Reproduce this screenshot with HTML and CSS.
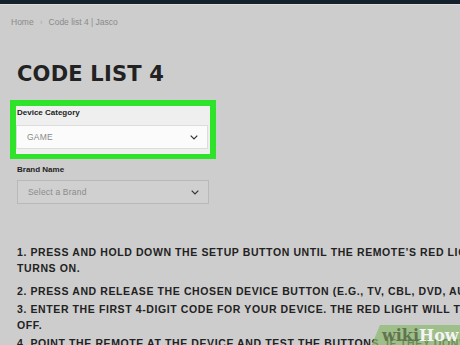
FILE: index.html
```html
<!DOCTYPE html>
<html lang="en">
<head>
    <meta charset="UTF-8">
    <meta name="viewport" content="width=device-width, initial-scale=1.0">
    <title>Code List 4 | Jasco</title>
    <link rel="stylesheet" href="styles.css">
</head>
<body>
    <div class="topbar"></div>

    <div class="page">
        <!-- Breadcrumb -->
        <div class="breadcrumb">
            <span>Home</span>
            <span class="sep">›</span>
            <span>Code list 4 | Jasco</span>
        </div>

        <h1>CODE LIST 4</h1>

        <!-- Highlighted field -->
        <div class="highlight">
            <div class="field">
                <label>Device Category</label>
                <div class="select select-white">
                    <span>GAME</span>
                    <svg class="chevron" width="8" height="5" viewBox="0 0 8 5"><path d="M0.7 0.7 L4 4 L7.3 0.7" fill="none" stroke="#333" stroke-width="1.2"/></svg>
                </div>
            </div>
        </div>

        <div class="field field-plain">
            <label>Brand Name</label>
            <div class="select">
                <span>Select a Brand</span>
                <svg class="chevron" width="8" height="5" viewBox="0 0 8 5"><path d="M0.7 0.7 L4 4 L7.3 0.7" fill="none" stroke="#333" stroke-width="1.2"/></svg>
            </div>
        </div>

        <!-- Programming steps -->
        <div class="steps">
            <p class="first">1. PRESS AND HOLD DOWN THE SETUP BUTTON UNTIL THE REMOTE’S RED LIGHT<br>TURNS ON.</p>
            <p>2. PRESS AND RELEASE THE CHOSEN DEVICE BUTTON (E.G., TV, CBL, DVD, AUX).</p>
            <p>3. ENTER THE FIRST 4-DIGIT CODE FOR YOUR DEVICE. THE RED LIGHT WILL TURN<br>OFF.</p>
            <p>4. POINT THE REMOTE AT THE DEVICE AND TEST THE BUTTONS. IF THEY DON'T WORK</p>
        </div>
    </div>

    <div class="watermark"><span class="wiki">wiki</span><span class="how">How</span></div>
</body>
</html>
```

FILE: styles.css
```css
* {
    margin: 0;
    padding: 0;
    box-sizing: border-box;
}

body {
    width: 460px;
    height: 345px;
    overflow: hidden;
    position: relative;
    font-family: "Liberation Sans", Arial, sans-serif;
    background: #cdcdcd;
    color: #222;
}

.topbar {
    height: 5px;
    background: #14202c;
    border-bottom: 1px solid #e2dada;
}

.page {
    padding-left: 17px;
    white-space: nowrap;
    overflow: hidden;
}

.breadcrumb {
    margin: 12px 0 0 -6px;
    font-size: 8.5px;
    color: #8a8a8a;
    display: flex;
    gap: 6px;
}

.breadcrumb .sep {
    color: #aaa;
}

h1 {
    margin-top: 36px;
    font-family: "DejaVu Sans", sans-serif;
    font-size: 21px;
    font-weight: bold;
    color: #222;
    letter-spacing: 0.2px;
    line-height: 22px;
}

.highlight {
    width: 206px;
    margin: 15px 0 0 -7px;
    border: 6px solid #2fe32a;
    border-bottom-width: 5px;
    background: #efefef;
    padding: 0 0 5px 0;
}

.field label {
    display: block;
    font-size: 8px;
    font-weight: bold;
    color: #222;
    line-height: 10px;
}

.highlight .field label {
    padding: 2px 0 0 1px;
    margin-bottom: 7px;
}

.select {
    width: 192px;
    height: 24px;
    border: 1px solid #b9b9b9;
    background: #d0d0d0;
    display: flex;
    align-items: center;
    justify-content: space-between;
    padding: 0 9px 0 10px;
    font-size: 8.5px;
    letter-spacing: 0.2px;
    color: #8a8a8a;
}

.select-white {
    background: #fbfbfb;
    border-color: #dcdcdc;
}

.field-plain {
    margin-top: 6px;
}

.field-plain label {
    margin-bottom: 5px;
}

.steps {
    margin-top: 40px;
    font-size: 10.5px;
    font-weight: bold;
    letter-spacing: 0.6px;
    line-height: 16px;
}

.steps p {
    margin-bottom: 2px;
}

.steps p.first {
    margin-bottom: 7px;
}

.watermark {
    position: absolute;
    right: -4px;
    bottom: -4px;
    width: 94px;
    height: 24px;
    background: rgba(140, 185, 110, 0.7);
    clip-path: polygon(10px 0, 100% 0, 100% 100%, 0 100%);
    padding-left: 12px;
    font-family: "DejaVu Serif", serif;
    font-weight: bold;
    font-size: 16px;
    line-height: 22px;
}

.watermark .wiki {
    color: #62744f;
}

.watermark .how {
    color: #f4f4f4;
}
```
